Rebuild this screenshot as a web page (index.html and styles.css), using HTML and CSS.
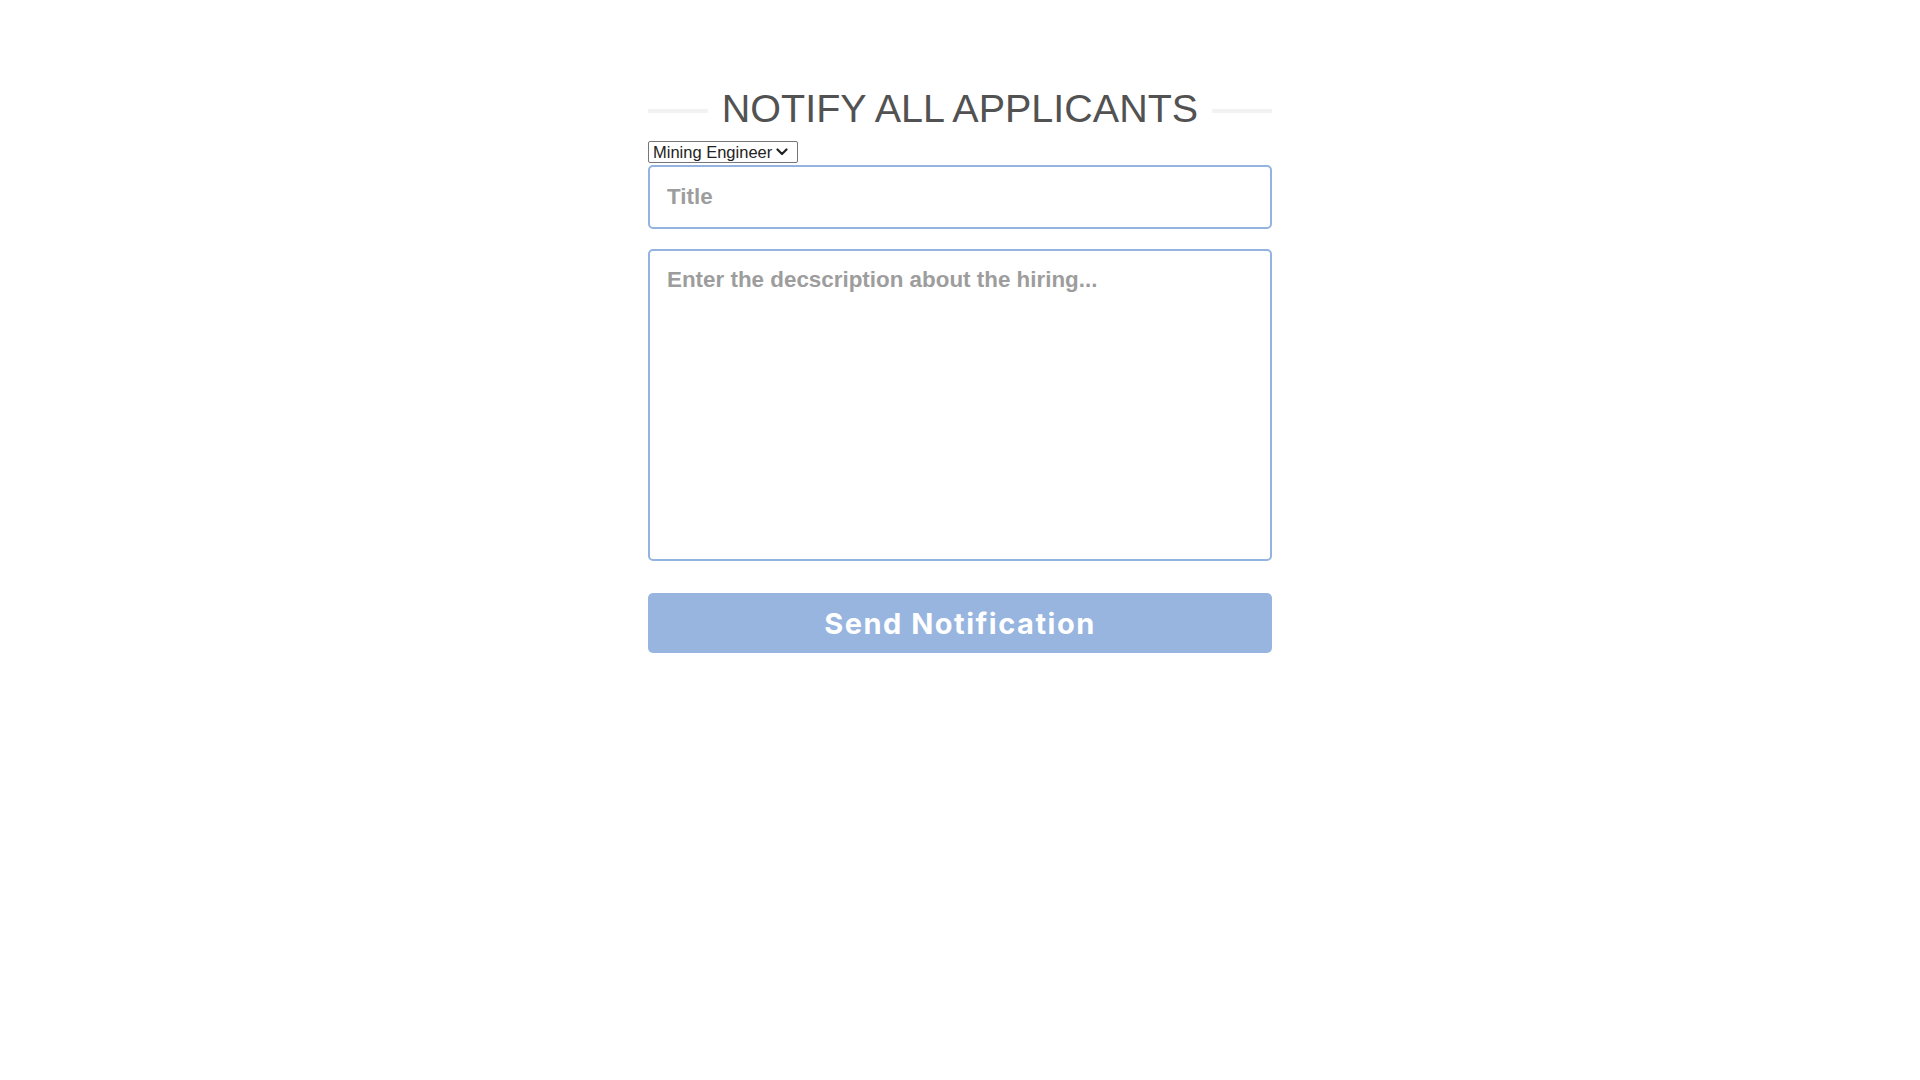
FILE: index.html
```html
<!DOCTYPE html>
<html lang="en">
<head>
<meta charset="utf-8">
<title>Notify All Applicants</title>
<link rel="stylesheet" href="styles.css">
</head>
<body>
<main class="notify">
  <div class="notify__heading">
    <span class="notify__rule"></span>
    <h1 class="notify__title">NOTIFY ALL APPLICANTS</h1>
    <span class="notify__rule"></span>
  </div>
  <select class="notify__select">
    <option>Mining Engineer</option>
  </select>
  <input class="notify__input" type="text" placeholder="Title">
  <textarea class="notify__textarea" placeholder="Enter the decscription about the hiring..."></textarea>
  <button class="notify__button" type="button">Send Notification</button>
</main>
</body>
</html>
```

FILE: styles.css
```css
html, body {
  margin: 0;
  padding: 0;
  background: #ffffff;
}

body {
  font-family: "Liberation Sans", Arial, sans-serif;
}

.notify {
  width: 624px;
  margin: 0 auto;
  padding-top: 86px;
  display: flex;
  flex-direction: column;
}

.notify__heading {
  display: flex;
  align-items: center;
  gap: 14px;
  height: 45px;
}

.notify__rule {
  flex: 1;
  height: 4px;
  background: #f2f2f2;
  margin-top: 5px;
}

.notify__title {
  margin: 0;
  font-family: "Liberation Sans", Arial, sans-serif;
  font-weight: 400;
  font-size: 39.5px;
  line-height: 45px;
  color: #525252;
  white-space: nowrap;
}

.notify__select {
  -webkit-appearance: none;
  appearance: none;
  align-self: flex-start;
  box-sizing: border-box;
  margin-top: 10px;
  height: 22px;
  width: 150px;
  font-family: "Liberation Sans", Arial, sans-serif;
  font-size: 16.5px;
  line-height: 20px;
  color: #222;
  background-color: #fff;
  background-image: url("data:image/svg+xml,%3Csvg xmlns='http://www.w3.org/2000/svg' width='12' height='8' viewBox='0 0 12 8'%3E%3Cpath d='M1.5 1.5 L6 6 L10.5 1.5' fill='none' stroke='%23222' stroke-width='2.2' stroke-linecap='round' stroke-linejoin='round'/%3E%3C/svg%3E");
  background-repeat: no-repeat;
  background-position: right 9px center;
  background-size: 12px 8px;
  border: 1px solid #767676;
  border-radius: 2px;
  padding: 0 0 0 4px;
}

.notify__input,
.notify__textarea {
  box-sizing: border-box;
  width: 100%;
  border: 2px solid #93b3e0;
  border-radius: 5px;
  font-family: "Liberation Sans", Arial, sans-serif;
  font-size: 22.4px;
  font-weight: 700;
  color: #444;
  background: #fff;
  outline: none;
  padding: 0 17px;
  margin: 0;
}

.notify__input {
  margin-top: 2px;
  height: 64px;
}

.notify__textarea {
  margin-top: 20px;
  height: 312px;
  padding-top: 16px;
  resize: none;
  display: block;
}

.notify__input::placeholder,
.notify__textarea::placeholder {
  color: #9d9d9d;
  opacity: 1;
}

.notify__button {
  margin-top: 32px;
  height: 60px;
  width: 100%;
  border: none;
  border-radius: 5px;
  background: #97b5df;
  color: #ffffff;
  font-family: Inter, "Open Sans", sans-serif;
  font-weight: 700;
  font-size: 29px;
  letter-spacing: 1.5px;
  cursor: pointer;
}
```
